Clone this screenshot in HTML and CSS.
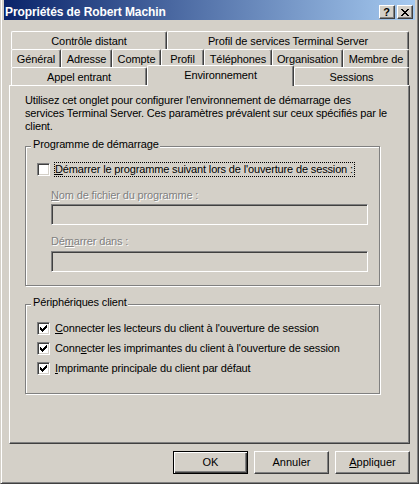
FILE: index.html
```html
<!DOCTYPE html>
<html lang="fr">
<head>
<meta charset="utf-8">
<title>Propriétés de Robert Machin</title>
<link rel="stylesheet" href="styles.css">
</head>
<body>
<div class="window">
  <div class="titlebar">
    <span class="title">Propriétés de Robert Machin</span>
    <div class="tbtns">
      <span class="tbtn help">?</span>
      <span class="tbtn close">
        <svg width="8" height="7" viewBox="0 0 8 7" shape-rendering="crispEdges">
          <rect x="0" y="0" width="2" height="1"/><rect x="6" y="0" width="2" height="1"/>
          <rect x="1" y="1" width="2" height="1"/><rect x="5" y="1" width="2" height="1"/>
          <rect x="2" y="2" width="4" height="1"/>
          <rect x="3" y="3" width="2" height="1"/>
          <rect x="2" y="4" width="4" height="1"/>
          <rect x="1" y="5" width="2" height="1"/><rect x="5" y="5" width="2" height="1"/>
          <rect x="0" y="6" width="2" height="1"/><rect x="6" y="6" width="2" height="1"/>
        </svg>
      </span>
    </div>
  </div>
  <div class="client">
    <div class="tabstrip">
      <div class="tabrow">
        <div class="tab w156">Contrôle distant</div>
        <div class="tab w242">Profil de services Terminal Server</div>
      </div>
      <div class="tabrow">
        <div class="tab w50">Général</div>
        <div class="tab w51">Adresse</div>
        <div class="tab w49">Compte</div>
        <div class="tab w43">Profil</div>
        <div class="tab w68">Téléphones</div>
        <div class="tab w71">Organisation</div>
        <div class="tab w66">Membre de</div>
      </div>
      <div class="tabrow">
        <div class="tab w136">Appel entrant</div>
        <div class="tab sel w147">Environnement</div>
        <div class="tab w115">Sessions</div>
      </div>
    </div>
    <div class="panel">
      <div class="desc">Utilisez cet onglet pour configurer l'environnement de démarrage des<br>services Terminal Server. Ces paramètres prévalent sur ceux spécifiés par le<br>client.</div>
      <div class="group g1">
        <span class="legend">Programme de démarrage</span>
        <div class="cbrow">
          <span class="cb"></span>
          <span class="lbl focus"><u>D</u>émarrer le programme suivant lors de l'ouverture de session :</span>
        </div>
        <div class="dlabel dl1"><u>N</u>om de fichier du programme :</div>
        <div class="field f1"></div>
        <div class="dlabel dl2">Dé<u>m</u>arrer dans :</div>
        <div class="field f2"></div>
      </div>
      <div class="group g2">
        <span class="legend">Périphériques client</span>
        <div class="cblist">
          <div class="cbrow">
            <span class="cb"><svg class="chk" width="11" height="11" viewBox="0 0 11 11" shape-rendering="crispEdges"><rect x="2" y="4" width="1" height="3"/><rect x="3" y="5" width="1" height="3"/><rect x="4" y="6" width="1" height="3"/><rect x="5" y="5" width="1" height="3"/><rect x="6" y="4" width="1" height="3"/><rect x="7" y="3" width="1" height="3"/><rect x="8" y="2" width="1" height="3"/></svg></span>
            <span class="lbl"><u>C</u>onnecter les lecteurs du client à l'ouverture de session</span>
          </div>
          <div class="cbrow">
            <span class="cb"><svg class="chk" width="11" height="11" viewBox="0 0 11 11" shape-rendering="crispEdges"><rect x="2" y="4" width="1" height="3"/><rect x="3" y="5" width="1" height="3"/><rect x="4" y="6" width="1" height="3"/><rect x="5" y="5" width="1" height="3"/><rect x="6" y="4" width="1" height="3"/><rect x="7" y="3" width="1" height="3"/><rect x="8" y="2" width="1" height="3"/></svg></span>
            <span class="lbl">Conn<u>e</u>cter les imprimantes du client à l'ouverture de session</span>
          </div>
          <div class="cbrow">
            <span class="cb"><svg class="chk" width="11" height="11" viewBox="0 0 11 11" shape-rendering="crispEdges"><rect x="2" y="4" width="1" height="3"/><rect x="3" y="5" width="1" height="3"/><rect x="4" y="6" width="1" height="3"/><rect x="5" y="5" width="1" height="3"/><rect x="6" y="4" width="1" height="3"/><rect x="7" y="3" width="1" height="3"/><rect x="8" y="2" width="1" height="3"/></svg></span>
            <span class="lbl"><u>I</u>mprimante principale du client par défaut</span>
          </div>
        </div>
      </div>
    </div>
    <div class="buttons">
      <span class="btn default">OK</span>
      <span class="btn">Annuler</span>
      <span class="btn"><u>A</u>ppliquer</span>
    </div>
  </div>
</div>
</body>
</html>
```
FILE: styles.css
```css
* { box-sizing: border-box; }
html, body { margin: 0; padding: 0; }
body {
  width: 419px;
  height: 484px;
  overflow: hidden;
  background: #d4d0c8;
  font-family: "Liberation Sans", Arial, sans-serif;
  font-size: 11px;
  color: #000;
}
.window {
  width: 419px;
  height: 484px;
  background: #d4d0c8;
  border-left: 1px solid #d4d0c8;
  border-right: 1px solid #404040;
  border-bottom: 1px solid #404040;
  box-shadow: inset 1px 0 #fff, inset -1px -1px #808080;
  padding: 0 3px;
  display: flex;
  flex-direction: column;
}
.titlebar {
  height: 20px;
  flex: none;
  display: flex;
  align-items: flex-start;
  background: linear-gradient(to right, #0a246a, #a6caf0);
  padding: 0 2px 0 1px;
}
.title {
  flex: 1;
  color: #fff;
  font-weight: bold;
  font-size: 12px;
  line-height: 16px;
  margin-top: 4px;
  letter-spacing: -0.1px;
  white-space: nowrap;
}
.tbtns { display: flex; gap: 2px; margin-top: 5px; }
.tbtn {
  width: 16px;
  height: 14px;
  background: #d4d0c8;
  border: 1px solid;
  border-color: #fff #404040 #404040 #fff;
  box-shadow: inset -1px -1px #808080;
  display: flex;
  align-items: center;
  justify-content: center;
}
.help { font-weight: bold; font-size: 11px; line-height: 12px; padding-right: 1px; }
.close svg { display: block; fill: #000; margin-right: 1px; }
.client {
  flex: 1;
  display: flex;
  flex-direction: column;
  padding: 11px 5px 0 5px;
}
.tabstrip { padding: 0 1px 0 2px; }
.tabrow { display: flex; height: 18px; align-items: flex-start; }
.tab {
  flex: none;
  height: 18px;
  border-top: 1px solid #fff;
  border-left: 1px solid #fff;
  border-right: 1px solid #404040;
  box-shadow: inset -1px 0 #808080;
  border-radius: 2px 2px 0 0;
  padding-top: 1px;
  line-height: 16px;
  text-align: center;
  white-space: nowrap;
  background: #d4d0c8;
  letter-spacing: -0.1px;
}
.tab.sel { position: relative; z-index: 2; height: 21px; margin-top: -2px; }
.w156 { width: 156px; } .w242 { width: 242px; }
.w50 { width: 50px; } .w51 { width: 51px; } .w49 { width: 49px; } .w43 { width: 43px; }
.w68 { width: 68px; } .w71 { width: 71px; } .w66 { width: 66px; }
.w136 { width: 136px; } .w147 { width: 147px; } .w115 { width: 115px; }
.panel {
  height: 359px;
  flex: none;
  border: 1px solid;
  border-color: #fff #404040 #404040 #fff;
  box-shadow: inset -1px -1px #808080;
  padding: 8px 0 0 15px;
  letter-spacing: -0.15px;
}
.desc { line-height: 13px; white-space: nowrap; }
.group {
  position: relative;
  width: 355px;
  border: 1px solid #808080;
  box-shadow: inset 1px 1px #fff, 1px 1px #fff;
}
.g1 { margin-top: 13px; height: 140px; padding: 15px 0 0 11px; }
.g2 { margin-top: 18px; height: 90px; padding: 16px 0 0 11px; }
.legend {
  position: absolute;
  left: 5px;
  top: -9px;
  padding: 0 1px 0 2px;
  background: #d4d0c8;
  line-height: 13px;
  white-space: nowrap;
}
.cblist { display: flex; flex-direction: column; gap: 5px; }
.cbrow { display: flex; align-items: flex-start; height: 15px; }
.cb {
  flex: none;
  margin-top: 1px;
  width: 13px;
  height: 13px;
  border: 1px solid;
  border-color: #808080 #fff #fff #808080;
  box-shadow: inset 1px 1px #404040, inset -1px -1px #d4d0c8;
  background: #fff;
}
.chk { display: block; fill: #000; }
.lbl {
  margin-left: 4px;
  border: 1px dotted transparent;
  line-height: 13px;
  padding-right: 1px;
  white-space: nowrap;
}
.lbl.focus { border-color: #000; }
.dlabel {
  margin-left: 14px;
  line-height: 13px;
  color: #808080;
  text-shadow: 1px 1px 0 #fff;
  white-space: nowrap;
}
.dl1 { margin-top: 12px; }
.dl2 { margin-top: 10px; }
.field {
  margin-left: 14px;
  width: 317px;
  height: 21px;
  border: 1px solid;
  border-color: #808080 #fff #fff #808080;
  box-shadow: inset 1px 1px #404040, inset -1px -1px #d4d0c8;
  background: #d4d0c8;
}
.f1 { margin-top: 2px; }
.f2 { margin-top: 3px; }
.buttons {
  display: flex;
  justify-content: flex-end;
  gap: 6px;
  margin-top: 7px;
}
.btn {
  width: 75px;
  height: 23px;
  border: 1px solid;
  border-color: #fff #404040 #404040 #fff;
  box-shadow: inset -1px -1px #808080;
  text-align: center;
  line-height: 21px;
}
.btn.default {
  border-color: #000;
  box-shadow: inset 1px 1px #fff, inset -1px -1px #404040, inset -2px -2px #808080;
}
```
